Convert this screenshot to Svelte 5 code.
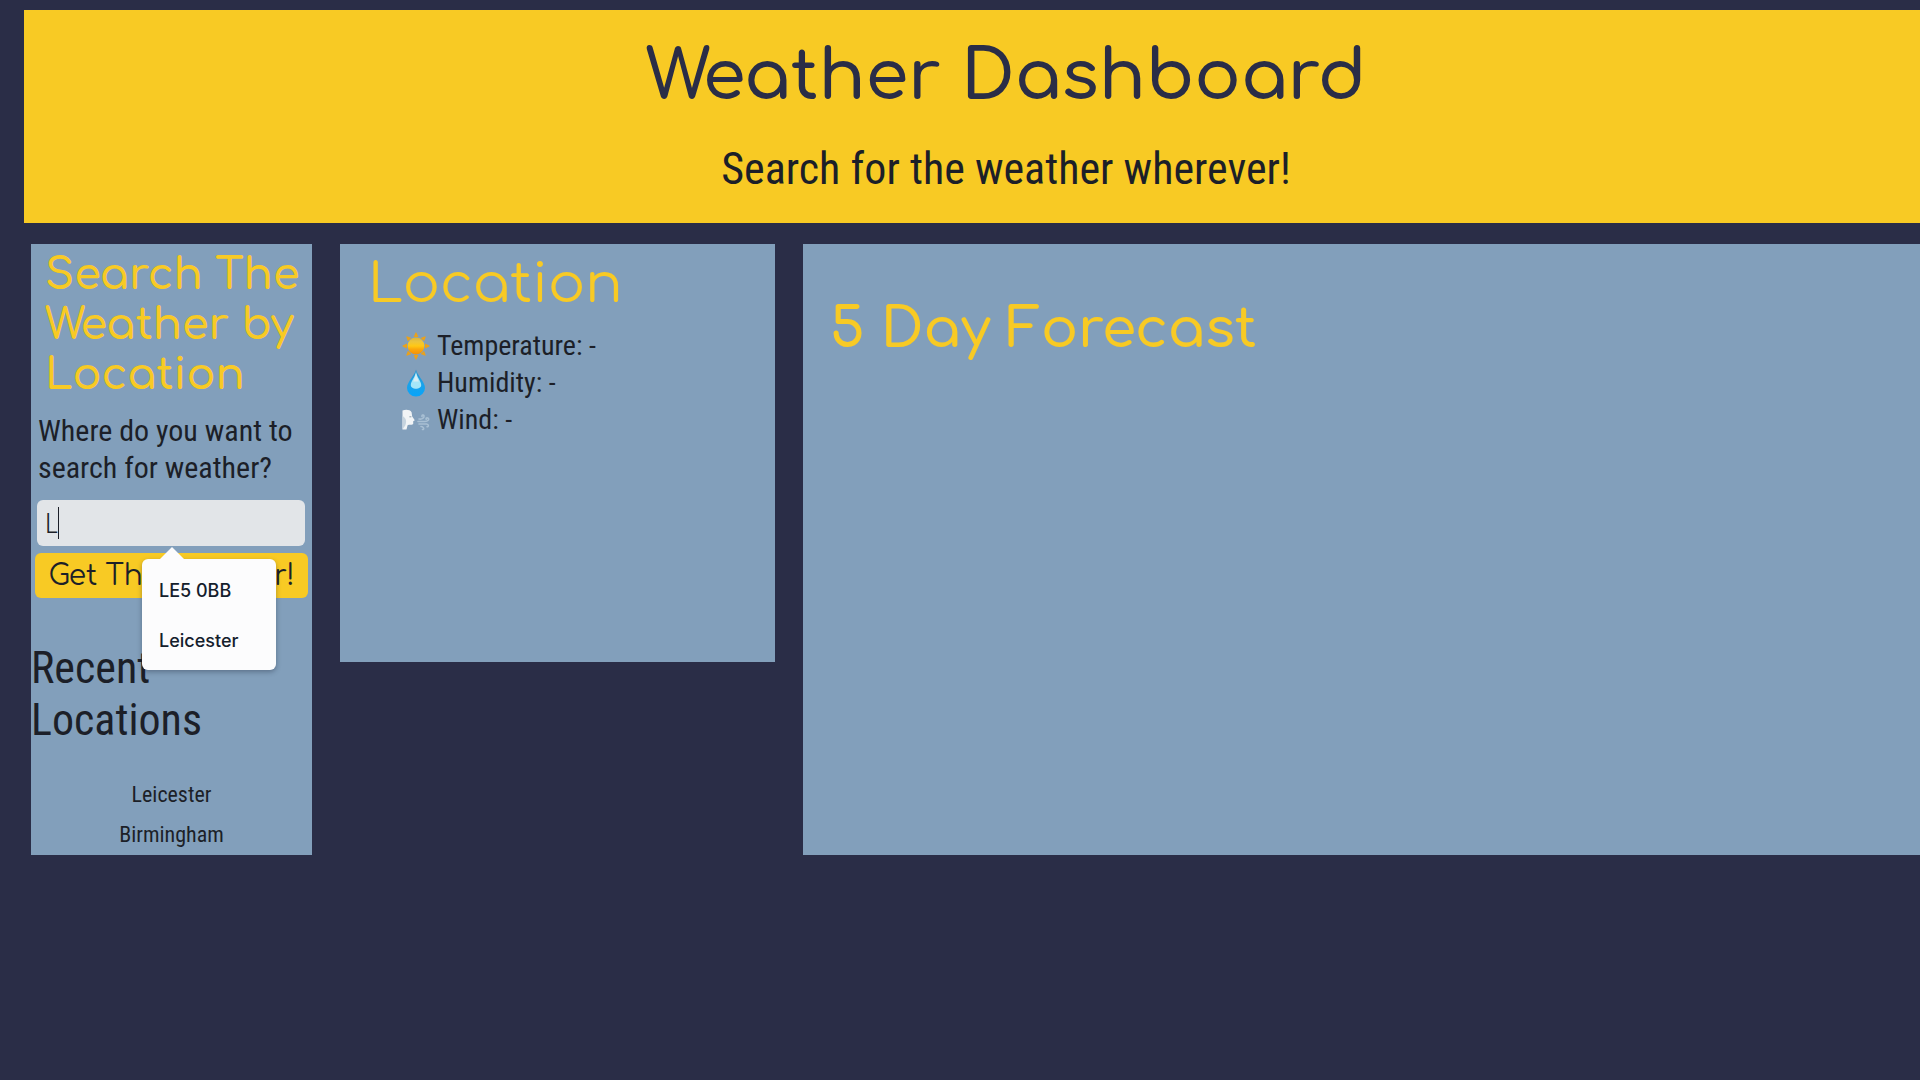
<script lang="ts">
  let query = $state('L');
  const suggestions = ['LE5 0BB', 'Leicester'];
  const recent = ['Leicester', 'Birmingham'];
</script>

<div class="page">
  <header>
    <h1>Weather Dashboard</h1>
    <p>Search for the weather wherever!</p>
  </header>

  <main>
    <section class="card search">
      <h2>Search The Weather by Location</h2>
      <form onsubmit={(e) => e.preventDefault()}>
        <label for="place">Where do you want to search for weather?</label>
        <div class="field">
          <input id="place" type="text" autocomplete="off" bind:value={query} />
          <span class="caret"></span>
          <ul class="suggestions">
            {#each suggestions as item}
              <li><button type="button" onclick={() => (query = item)}>{item}</button></li>
            {/each}
          </ul>
        </div>
        <button class="submit" type="submit">Get The Weather!</button>
      </form>
      <h3>Recent Locations</h3>
      <ul class="recent">
        {#each recent as place}
          <li>{place}</li>
        {/each}
      </ul>
    </section>

    <section class="card location">
      <h2>Location</h2>
      <ul class="readings">
        <li>
          <svg viewBox="0 0 28 28" aria-hidden="true">
            <defs>
              <linearGradient id="sun" x1="0" y1="0" x2="0" y2="1">
                <stop offset="0" stop-color="#dcb53c" />
                <stop offset="0.25" stop-color="#ecc53c" />
                <stop offset="0.5" stop-color="#ffc814" />
                <stop offset="0.7" stop-color="#fba60c" />
                <stop offset="1" stop-color="#f39108" />
              </linearGradient>
            </defs>
            <g fill="#e9a11c">
              {#each [0, 45, 90, 135, 180, 225, 270, 315] as angle}
                <path d="M11.600 5 13.600 0.600H14.400L16.400 5Z" transform="rotate({angle} 14 14)" />
              {/each}
            </g>
            <circle cx="14" cy="14" r="8.4" fill="url(#sun)" />
          </svg>
          <span>Temperature: -</span>
        </li>
        <li>
          <svg viewBox="0 0 28 28" aria-hidden="true">
            <defs>
              <linearGradient id="drop" x1="0" y1="0" x2="0" y2="1">
                <stop offset="0" stop-color="#2a8fc9" />
                <stop offset="0.5" stop-color="#1ba2e8" />
                <stop offset="1" stop-color="#08a4fa" />
              </linearGradient>
            </defs>
            <path d="M14 0.5C14.8 6 23 12.5 23 19A9 8.6 0 0 1 5 19C5 12.5 13.2 6 14 0.5Z" fill="url(#drop)" />
            <path d="M14 2.5C14.6 8 19.2 12 19.2 16C19.2 21 8.8 21 8.8 16C8.8 12 13.4 8 14 2.5Z" fill="#a5e6f8" />
            <path d="M14 4C14.4 8 16.5 10.500 16.8 12.500H11.2C11.500 10.500 13.600 8 14 4Z" fill="#d8eef4" />
          </svg>
          <span>Humidity: -</span>
        </li>
        <li>
          <svg viewBox="0 0 28 28" aria-hidden="true">
            <path d="M0.500 4.500C4 3.200 8 3.600 9.600 6.200L10.200 10.500 12.800 14.200 11.200 15.200V18C10.600 19.200 7 18.200 5.600 19.200L4.500 23.500H0.500Z" fill="#f1f4f6" />
            <path d="M0.500 10C4 12 5 15 3.200 19.500L0.500 23.500Z" fill="#c6d4df" />
            <path d="M7.400 10.800H9.400" stroke="#8d9fad" stroke-width="1" />
            <g fill="none" stroke="#a9c0d4" stroke-width="1.600" stroke-linecap="round">
              <path d="M16 15.500H23C26 15.500 27.500 13.500 26 12.200C25 11.500 23.800 12.200 24.200 13.200" />
              <path d="M17 13C20 13.600 22.500 12 22 9.800C21.500 8.400 19.500 9 20 10.400" />
              <path d="M17 18H24.500C27 18.200 26.800 21 25 20.800" />
              <path d="M19 20.500C21.500 20.500 22.800 23.500 20.500 23.500" />
            </g>
          </svg>
          <span>Wind: -</span>
        </li>
      </ul>
    </section>

    <section class="card forecast">
      <h2>5 Day Forecast</h2>
    </section>
  </main>
</div>

<style>
  :global(body) {
    margin: 0;
    background: #2a2d47;
  }

  .page {
    --display: Comfortaa, Lato, sans-serif;
    --yellow: #f8ca24;
    --ink: #1c1f28;
    box-sizing: border-box;
    min-height: 100vh;
    padding: 10px 0 32px 24px;
    overflow: hidden;
    color: var(--ink);
    font-family: 'Roboto Condensed', Roboto, sans-serif;
  }

  h1, h2, h3, p, ul {
    margin: 0;
    padding: 0;
    font-weight: 400;
  }

  ul {
    list-style: none;
  }

  header {
    padding: 25px 0 29px 68px;
    background: var(--yellow);
    text-align: center;
  }

  h1 {
    color: #2a2d47;
    font: 600 69px/84px var(--display);
  }

  header p {
    margin-top: 26px;
    font-size: 44px;
    line-height: 49px;
  }

  main {
    display: grid;
    grid-template-columns: 281fr 435fr 1117fr;
    gap: 28px;
    margin: 21px 0 0 7px;
  }

  .card {
    background: #829fbb;
  }

  h2 {
    color: var(--yellow);
    font-family: var(--display);
    font-weight: 600;
  }

  .search h2 {
    padding: 6px 0 0 14px;
    font-size: 43px;
    line-height: 50px;
  }

  form {
    display: flex;
    flex-direction: column;
    padding: 12px 4px 0;
  }

  label {
    padding-left: 3px;
    font-size: 30px;
    line-height: 37px;
  }

  .field {
    position: relative;
    margin: 14px 3px 7px 2px;
  }

  input {
    display: block;
    box-sizing: border-box;
    width: 100%;
    height: 46px;
    padding: 0 8px;
    border: 0;
    border-radius: 6px;
    background: #e2e5e8;
    color: var(--ink);
    font: 300 28px 'Roboto Condensed', Roboto, sans-serif;
  }

  .caret {
    position: absolute;
    top: 7px;
    left: 21px;
    width: 1px;
    height: 32px;
    background: var(--ink);
  }

  .submit {
    height: 45px;
    padding: 0;
    border: 0;
    border-radius: 6px;
    background: var(--yellow);
    color: var(--ink);
    font: 400 28px/44px var(--display);
    white-space: nowrap;
  }

  .suggestions {
    position: absolute;
    z-index: 1;
    top: 59px;
    left: 105px;
    width: 134px;
    padding: 7px 0 4px;
    border-radius: 6px;
    background: #fcfcfd;
    box-shadow: 0 2px 5px rgb(20 30 50 / 35%);
  }

  .suggestions::before {
    content: '';
    position: absolute;
    top: -12px;
    left: 18px;
    width: 24px;
    height: 12px;
    background: #fcfcfd;
    clip-path: polygon(50% 0, 100% 100%, 0 100%);
  }

  .suggestions button {
    display: block;
    width: 100%;
    padding: 0 0 0 17px;
    border: 0;
    background: none;
    color: #14202c;
    font: 500 18px/50px Inter, sans-serif;
    text-align: left;
  }

  h3 {
    margin-top: 44px;
    font-size: 44px;
    line-height: 52px;
  }

  .recent {
    margin-top: 29px;
    font-size: 22px;
    line-height: 40px;
    text-align: center;
  }

  .location {
    align-self: start;
    box-sizing: border-box;
    min-height: 418px;
    padding: 11px 28px;
  }

  .location h2 {
    font-size: 55px;
    font-weight: 400;
    line-height: 60px;
  }

  .readings {
    margin: 12px 0 0 34px;
    font-size: 28px;
    line-height: 37px;
  }

  .readings li {
    display: flex;
    align-items: center;
    gap: 7px;
  }

  .readings svg {
    width: 28px;
    height: 28px;
  }

  .forecast {
    padding: 56px 27px;
  }

  .forecast h2 {
    font-size: 55px;
    line-height: 60px;
  }
</style>
